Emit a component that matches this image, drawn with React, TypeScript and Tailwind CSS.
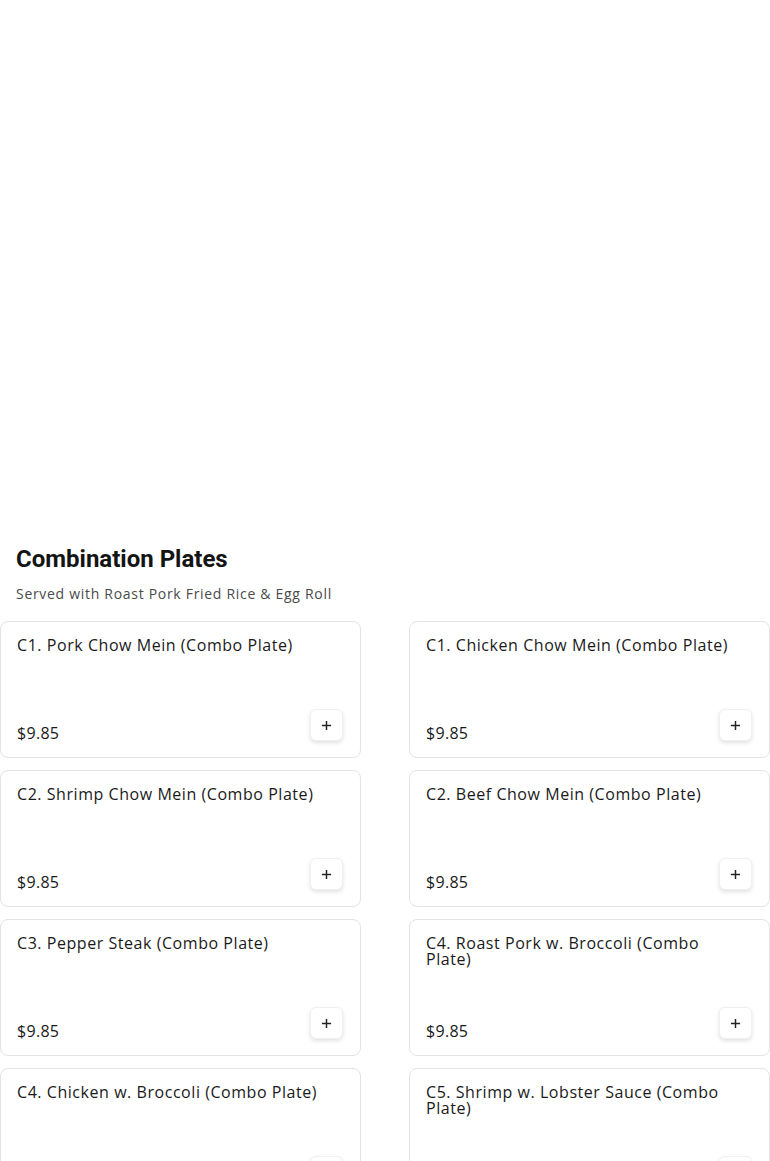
const items = [
  'C1. Pork Chow Mein (Combo Plate)',
  'C1. Chicken Chow Mein (Combo Plate)',
  'C2. Shrimp Chow Mein (Combo Plate)',
  'C2. Beef Chow Mein (Combo Plate)',
  'C3. Pepper Steak (Combo Plate)',
  'C4. Roast Pork w. Broccoli (Combo Plate)',
  'C4. Chicken w. Broccoli (Combo Plate)',
  'C5. Shrimp w. Lobster Sauce (Combo Plate)',
]

function PlusIcon() {
  return (
    <svg width="11" height="11" viewBox="0 0 12 12" fill="none">
      <path d="M6 1v10M1 6h10" stroke="#222" strokeWidth="1.6" />
    </svg>
  )
}

function ItemCard({ name }: { name: string }) {
  return (
    <div className="h-[137px] rounded-lg border border-[#e3e3e3] bg-white px-4 pt-[15px] pb-[15px] flex flex-col justify-between">
      <h3 className="text-[16px] leading-[16px] text-[#1a1a1a] tracking-[0.55px] pr-5">{name}</h3>
      <div className="flex items-end justify-between">
        <span className="text-[16px] leading-5 text-[#1a1a1a] tracking-[0.3px] -mb-[1px]">$9.85</span>
        <button className="w-[33px] h-[32px] rounded-md bg-white border border-[#f0f0f0] shadow-[0_2px_4px_rgba(0,0,0,0.12)] flex items-center justify-center mb-[1px] mr-[1px]">
          <PlusIcon />
        </button>
      </div>
    </div>
  )
}

export default function App() {
  return (
    <div className="w-[770px] h-[1161px] overflow-hidden bg-white" style={{ fontFamily: '"Open Sans", sans-serif' }}>
      <div className="h-[543px]" />
      <div className="px-4">
        <h2 className="text-[24px] leading-8 font-bold text-[#141414]" style={{ fontFamily: 'Roboto, sans-serif' }}>
          Combination Plates
        </h2>
        <p className="mt-[9px] text-[14px] leading-5 text-[#4a4a4a] tracking-[0.7px]">
          Served with Roast Pork Fried Rice &amp; Egg Roll
        </p>
      </div>
      <div className="mt-[17px] grid grid-cols-2 gap-x-12 gap-y-3">
        {items.map((n) => (
          <ItemCard key={n} name={n} />
        ))}
      </div>
    </div>
  )
}
